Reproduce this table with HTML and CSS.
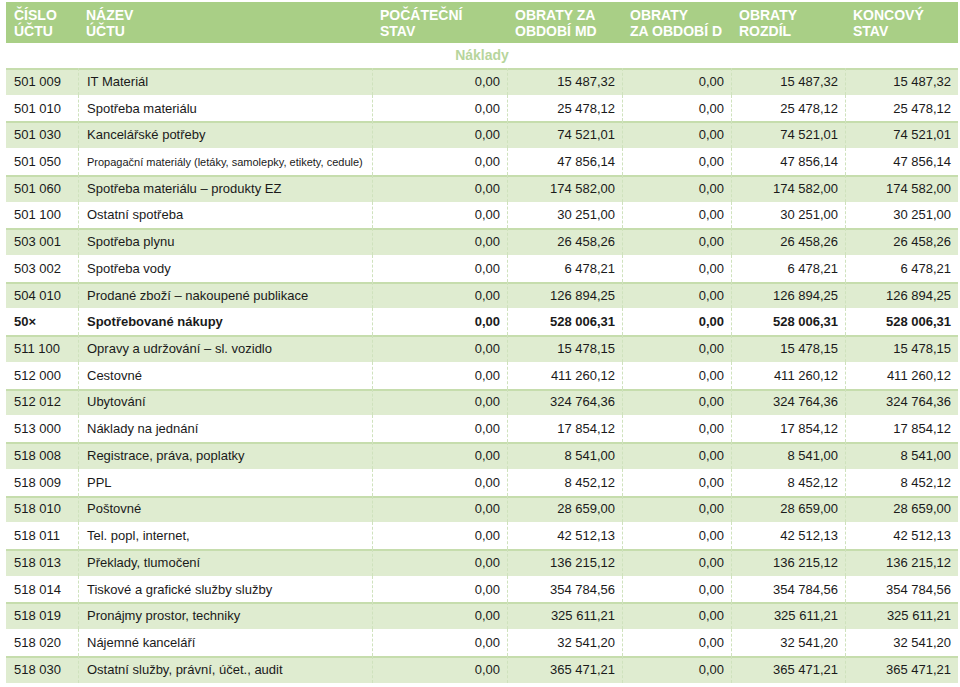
FILE: index.html
```html
<!DOCTYPE html>
<html lang="cs">
<head>
<meta charset="utf-8">
<title>Náklady</title>
<link rel="stylesheet" href="styles.css">
</head>
<body>
<div class="sheet">
  <div class="row head">
    <div class="c">ČÍSLO<br>ÚČTU</div>
    <div class="c">NÁZEV<br>ÚČTU</div>
    <div class="c">POČÁTEČNÍ<br>STAV</div>
    <div class="c">OBRATY ZA<br>OBDOBÍ MD</div>
    <div class="c">OBRATY<br>ZA OBDOBÍ D</div>
    <div class="c">OBRATY<br>ROZDÍL</div>
    <div class="c">KONCOVÝ<br>STAV</div>
  </div>
  <div class="section">Náklady</div>
  <div class="body">
    <div class="row g"><div class="c">501 009</div><div class="c">IT Materiál</div><div class="c n">0,00</div><div class="c n">15 487,32</div><div class="c n">0,00</div><div class="c n">15 487,32</div><div class="c n">15 487,32</div></div>
    <div class="row"><div class="c">501 010</div><div class="c">Spotřeba materiálu</div><div class="c n">0,00</div><div class="c n">25 478,12</div><div class="c n">0,00</div><div class="c n">25 478,12</div><div class="c n">25 478,12</div></div>
    <div class="row g"><div class="c">501 030</div><div class="c">Kancelářské potřeby</div><div class="c n">0,00</div><div class="c n">74 521,01</div><div class="c n">0,00</div><div class="c n">74 521,01</div><div class="c n">74 521,01</div></div>
    <div class="row"><div class="c">501 050</div><div class="c small">Propagační materiály (letáky, samolepky, etikety, cedule)</div><div class="c n">0,00</div><div class="c n">47 856,14</div><div class="c n">0,00</div><div class="c n">47 856,14</div><div class="c n">47 856,14</div></div>
    <div class="row g"><div class="c">501 060</div><div class="c">Spotřeba materiálu – produkty EZ</div><div class="c n">0,00</div><div class="c n">174 582,00</div><div class="c n">0,00</div><div class="c n">174 582,00</div><div class="c n">174 582,00</div></div>
    <div class="row"><div class="c">501 100</div><div class="c">Ostatní spotřeba</div><div class="c n">0,00</div><div class="c n">30 251,00</div><div class="c n">0,00</div><div class="c n">30 251,00</div><div class="c n">30 251,00</div></div>
    <div class="row g"><div class="c">503 001</div><div class="c">Spotřeba plynu</div><div class="c n">0,00</div><div class="c n">26 458,26</div><div class="c n">0,00</div><div class="c n">26 458,26</div><div class="c n">26 458,26</div></div>
    <div class="row"><div class="c">503 002</div><div class="c">Spotřeba vody</div><div class="c n">0,00</div><div class="c n">6 478,21</div><div class="c n">0,00</div><div class="c n">6 478,21</div><div class="c n">6 478,21</div></div>
    <div class="row g"><div class="c">504 010</div><div class="c">Prodané zboží – nakoupené publikace</div><div class="c n">0,00</div><div class="c n">126 894,25</div><div class="c n">0,00</div><div class="c n">126 894,25</div><div class="c n">126 894,25</div></div>
    <div class="row total"><div class="c">50×</div><div class="c">Spotřebované nákupy</div><div class="c n">0,00</div><div class="c n">528 006,31</div><div class="c n">0,00</div><div class="c n">528 006,31</div><div class="c n">528 006,31</div></div>
    <div class="row g"><div class="c">511 100</div><div class="c">Opravy a udržování – sl. vozidlo</div><div class="c n">0,00</div><div class="c n">15 478,15</div><div class="c n">0,00</div><div class="c n">15 478,15</div><div class="c n">15 478,15</div></div>
    <div class="row"><div class="c">512 000</div><div class="c">Cestovné</div><div class="c n">0,00</div><div class="c n">411 260,12</div><div class="c n">0,00</div><div class="c n">411 260,12</div><div class="c n">411 260,12</div></div>
    <div class="row g"><div class="c">512 012</div><div class="c">Ubytování</div><div class="c n">0,00</div><div class="c n">324 764,36</div><div class="c n">0,00</div><div class="c n">324 764,36</div><div class="c n">324 764,36</div></div>
    <div class="row"><div class="c">513 000</div><div class="c">Náklady na jednání</div><div class="c n">0,00</div><div class="c n">17 854,12</div><div class="c n">0,00</div><div class="c n">17 854,12</div><div class="c n">17 854,12</div></div>
    <div class="row g"><div class="c">518 008</div><div class="c">Registrace, práva, poplatky</div><div class="c n">0,00</div><div class="c n">8 541,00</div><div class="c n">0,00</div><div class="c n">8 541,00</div><div class="c n">8 541,00</div></div>
    <div class="row"><div class="c">518 009</div><div class="c">PPL</div><div class="c n">0,00</div><div class="c n">8 452,12</div><div class="c n">0,00</div><div class="c n">8 452,12</div><div class="c n">8 452,12</div></div>
    <div class="row g"><div class="c">518 010</div><div class="c">Poštovné</div><div class="c n">0,00</div><div class="c n">28 659,00</div><div class="c n">0,00</div><div class="c n">28 659,00</div><div class="c n">28 659,00</div></div>
    <div class="row"><div class="c">518 011</div><div class="c">Tel. popl, internet,</div><div class="c n">0,00</div><div class="c n">42 512,13</div><div class="c n">0,00</div><div class="c n">42 512,13</div><div class="c n">42 512,13</div></div>
    <div class="row g"><div class="c">518 013</div><div class="c">Překlady, tlumočení</div><div class="c n">0,00</div><div class="c n">136 215,12</div><div class="c n">0,00</div><div class="c n">136 215,12</div><div class="c n">136 215,12</div></div>
    <div class="row"><div class="c">518 014</div><div class="c">Tiskové a grafické služby služby</div><div class="c n">0,00</div><div class="c n">354 784,56</div><div class="c n">0,00</div><div class="c n">354 784,56</div><div class="c n">354 784,56</div></div>
    <div class="row g"><div class="c">518 019</div><div class="c">Pronájmy prostor, techniky</div><div class="c n">0,00</div><div class="c n">325 611,21</div><div class="c n">0,00</div><div class="c n">325 611,21</div><div class="c n">325 611,21</div></div>
    <div class="row"><div class="c">518 020</div><div class="c">Nájemné kanceláří</div><div class="c n">0,00</div><div class="c n">32 541,20</div><div class="c n">0,00</div><div class="c n">32 541,20</div><div class="c n">32 541,20</div></div>
    <div class="row g"><div class="c">518 030</div><div class="c">Ostatní služby, právní, účet., audit</div><div class="c n">0,00</div><div class="c n">365 471,21</div><div class="c n">0,00</div><div class="c n">365 471,21</div><div class="c n">365 471,21</div></div>
  </div>
</div>
</body>
</html>
```

FILE: styles.css
```css
html, body {
  margin: 0;
  padding: 0;
  background: #ffffff;
}
body {
  font-family: "Liberation Sans", Arial, Helvetica, sans-serif;
  color: #1a1a1a;
  font-size: 13px;
}
.sheet {
  width: 952px;
  margin: 2px 0 0 6px;
}
.row {
  display: grid;
  grid-template-columns: 72px 294px 135px 115px 109px 114px 113px;
}
.head {
  background: #a9cf86;
  color: #ffffff;
  font-weight: bold;
  font-size: 14px;
  line-height: 16px;
  height: 41px;
  box-sizing: border-box;
  padding-top: 5px;
}
.head .c {
  padding-left: 8px;
}
.section {
  height: 25px;
  line-height: 25px;
  text-align: center;
  font-weight: bold;
  font-size: 14px;
  color: #b7d59c;
}
.body {
  display: grid;
  grid-auto-rows: 26.73px;
}
.body .row {
  align-items: stretch;
}
.body .c {
  display: flex;
  align-items: center;
  padding: 0 7px 0 8px;
  white-space: nowrap;
  border-left: 1px dashed #cfe2bd;
}
.body .c:first-child {
  border-left: none;
}
.body .c.n {
  justify-content: flex-end;
}
.body .c.small {
  font-size: 11px;
}
.row.g {
  background: #dfecd0;
  box-shadow: inset 0 2px 0 #c6ddad;
}
.row.total {
  font-weight: bold;
}
```
